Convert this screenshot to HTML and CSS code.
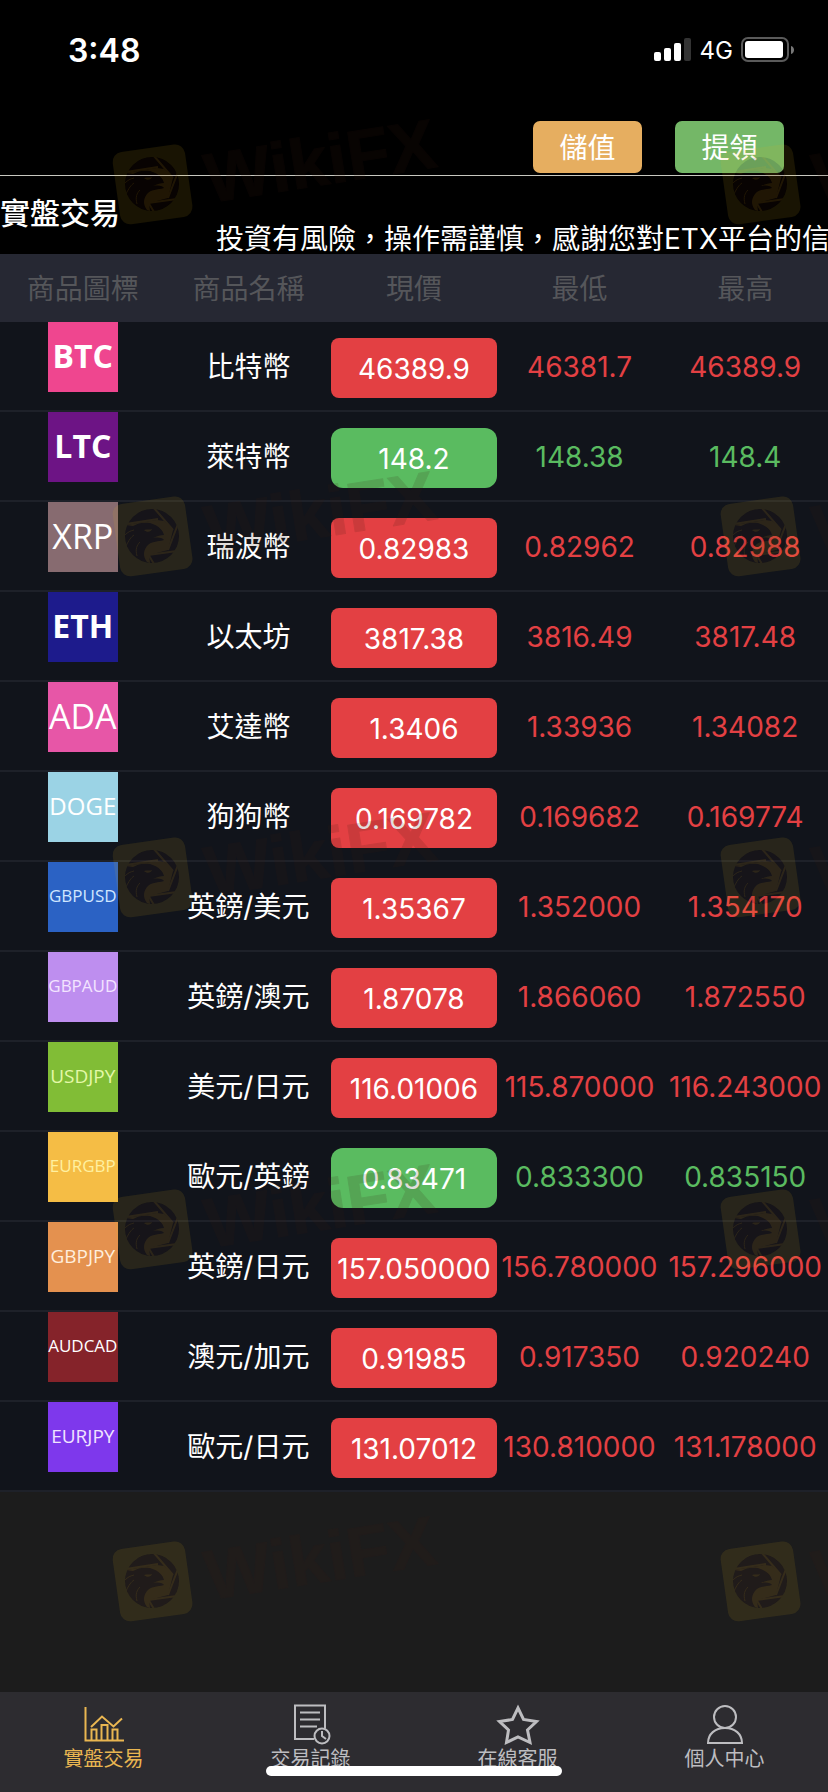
FILE: index.html
```html
<!DOCTYPE html>
<html lang="zh-Hant">
<head>
<meta charset="utf-8">
<meta name="viewport" content="width=device-width, initial-scale=1">
<title>實盤交易</title>
<link rel="stylesheet" href="styles.css">
</head>
<body>
<div class="app">
  <header class="top">
    <div class="status">
      <span class="clock">3:48</span>
      <div class="signals">
        <svg width="38" height="24" viewBox="0 0 38 24" aria-hidden="true">
          <rect x="0" y="14" width="7" height="9" rx="2" fill="#fff"/>
          <rect x="10" y="10" width="7" height="13" rx="2" fill="#fff"/>
          <rect x="20" y="5" width="7" height="18" rx="2" fill="#fff"/>
          <rect x="30" y="0" width="7" height="23" rx="2" fill="#333"/>
        </svg>
        <span class="network">4G</span>
        <svg width="54" height="26" viewBox="0 0 54 26" aria-hidden="true">
          <rect x="1" y="1" width="46" height="23" rx="6" fill="none" stroke="#5a5a5a" stroke-width="2"/>
          <rect x="4" y="4" width="38" height="17" rx="3" fill="#fff"/>
          <path d="M50 9c4 1 4 7 0 8z" fill="#777"/>
        </svg>
      </div>
    </div>
    <div class="actions">
      <button class="btn deposit" type="button">儲值</button>
      <button class="btn withdraw" type="button">提領</button>
    </div>
    <div class="notice">
      <h1 class="title">實盤交易</h1>
      <p class="ticker">投資有風險，操作需謹慎，感謝您對ETX平台的信</p>
    </div>
  </header>

  <main class="market">
    <table class="quotes">
      <thead>
        <tr><th>商品圖標</th><th>商品名稱</th><th>現價</th><th>最低</th><th>最高</th></tr>
      </thead>
      <tbody>
        <tr class="down"><td class="logo"><span class="tile btc">BTC</span></td><td class="name">比特幣</td><td class="now"><span class="price">46389.9</span></td><td class="num">46381.7</td><td class="num">46389.9</td></tr>
        <tr class="up"><td class="logo"><span class="tile ltc">LTC</span></td><td class="name">萊特幣</td><td class="now"><span class="price">148.2</span></td><td class="num">148.38</td><td class="num">148.4</td></tr>
        <tr class="down"><td class="logo"><span class="tile xrp">XRP</span></td><td class="name">瑞波幣</td><td class="now"><span class="price">0.82983</span></td><td class="num">0.82962</td><td class="num">0.82988</td></tr>
        <tr class="down"><td class="logo"><span class="tile eth">ETH</span></td><td class="name">以太坊</td><td class="now"><span class="price">3817.38</span></td><td class="num">3816.49</td><td class="num">3817.48</td></tr>
        <tr class="down"><td class="logo"><span class="tile ada">ADA</span></td><td class="name">艾達幣</td><td class="now"><span class="price">1.3406</span></td><td class="num">1.33936</td><td class="num">1.34082</td></tr>
        <tr class="down"><td class="logo"><span class="tile doge">DOGE</span></td><td class="name">狗狗幣</td><td class="now"><span class="price">0.169782</span></td><td class="num">0.169682</td><td class="num">0.169774</td></tr>
        <tr class="down"><td class="logo"><span class="tile pair gbpusd">GBPUSD</span></td><td class="name">英鎊/美元</td><td class="now"><span class="price">1.35367</span></td><td class="num">1.352000</td><td class="num">1.354170</td></tr>
        <tr class="down"><td class="logo"><span class="tile pair gbpaud">GBPAUD</span></td><td class="name">英鎊/澳元</td><td class="now"><span class="price">1.87078</span></td><td class="num">1.866060</td><td class="num">1.872550</td></tr>
        <tr class="down"><td class="logo"><span class="tile pair yen usdjpy">USDJPY</span></td><td class="name">美元/日元</td><td class="now"><span class="price">116.01006</span></td><td class="num">115.870000</td><td class="num">116.243000</td></tr>
        <tr class="up"><td class="logo"><span class="tile pair eurgbp">EURGBP</span></td><td class="name">歐元/英鎊</td><td class="now"><span class="price">0.83471</span></td><td class="num">0.833300</td><td class="num">0.835150</td></tr>
        <tr class="down"><td class="logo"><span class="tile pair yen gbpjpy">GBPJPY</span></td><td class="name">英鎊/日元</td><td class="now"><span class="price">157.050000</span></td><td class="num">156.780000</td><td class="num">157.296000</td></tr>
        <tr class="down"><td class="logo"><span class="tile pair audcad">AUDCAD</span></td><td class="name">澳元/加元</td><td class="now"><span class="price">0.91985</span></td><td class="num">0.917350</td><td class="num">0.920240</td></tr>
        <tr class="down"><td class="logo"><span class="tile pair yen eurjpy">EURJPY</span></td><td class="name">歐元/日元</td><td class="now"><span class="price">131.07012</span></td><td class="num">130.810000</td><td class="num">131.178000</td></tr>
      </tbody>
    </table>
  </main>

  <nav class="tabs">
    <a class="tab active" href="#market">
      <svg class="tab-icon" viewBox="0 0 40 40" aria-hidden="true"><path d="M1.500 2v33.500H40M7 22L18 11.500l11.500 10 8.500-8M7.500 35V24.500h5V35M17.500 35V20h6v15M28.500 35V24.500h5V35"/></svg>
      <span>實盤交易</span>
    </a>
    <a class="tab" href="#orders">
      <svg class="tab-icon" viewBox="0 0 40 40" aria-hidden="true"><path d="M23 34H4V0.500h30v23M9 7.500h20M9 14.500h20M9 21.500h17"/><circle cx="31" cy="31" r="7.500"/><path d="M31 26v5l4 3"/></svg>
      <span>交易記錄</span>
    </a>
    <a class="tab" href="#service">
      <svg class="tab-icon" viewBox="0 0 40 40" aria-hidden="true"><path class="thick" d="M20 3l5.500 11.500 13 2L29.500 25 32 37.500 20 32 8.500 37.500 10.500 25 1.500 16.500l13-2z"/></svg>
      <span>在線客服</span>
    </a>
    <a class="tab" href="#me">
      <svg class="tab-icon" viewBox="0 0 40 40" aria-hidden="true"><circle cx="20" cy="12" r="11"/><path d="M3 38c0-9 7-15 17-15s17 6 17 15z"/></svg>
      <span>個人中心</span>
    </a>
  </nav>
  <div class="home-bar"></div>

  <svg class="watermarks" aria-hidden="true">
    <defs>
      <mask id="eagle" maskUnits="userSpaceOnUse" x="-5" y="-5" width="95" height="95">
        <rect x="-5" y="-5" width="95" height="95" fill="#fff"/>
        <circle cx="40" cy="40" r="27" fill="#000"/>
        <path d="M14 29L45 24L52 25L61 34L56 54L37 59L38 67L35 66C31 61 31 55 35 50C39 45 45 46 52 44C51 42 47 41 41 42C45 40 49 39 52 39C51 35 48 30 38 27C31 26 26 27 21 30Z" fill="#fff"/>
        <g fill="none" stroke="#fff" stroke-width="2">
          <path d="M14 28L46 23M42 12L61 34M66 28L56 54M65 55L36 59M36 58L42 68"/>
        </g>
        <g fill="none" stroke="#fff" stroke-width="1">
          <path d="M13 39C16 36 18 35 22 34M14 50C17 44 19 41 22 39M25 60C23 53 25 49 28 46"/>
        </g>
        <path d="M32 34c3-1 6 0 8-1-1 3-5 4-8 1z" fill="#fff"/>
      </mask>
      <g id="mark">
        <circle cx="40" cy="40" r="27" fill="#3a1410" fill-opacity=".14"/>
        <g mask="url(#eagle)">
          <rect x="4" y="4" width="73" height="73" rx="10" transform="rotate(-8 40 40)" fill="#e6b818" fill-opacity=".11"/>
        </g>
        <text class="mark-text" transform="translate(97 59) rotate(-9)">WikiFX</text>
      </g>
    </defs>
    <use href="#mark" x="112" y="144"/><use href="#mark" x="720" y="144"/>
    <use href="#mark" x="112" y="496"/><use href="#mark" x="720" y="496"/>
    <use href="#mark" x="112" y="837"/><use href="#mark" x="720" y="837"/>
    <use href="#mark" x="112" y="1189"/><use href="#mark" x="720" y="1189"/>
    <use href="#mark" x="112" y="1541"/><use href="#mark" x="720" y="1541"/>
  </svg>
</div>
</body>
</html>
```
FILE: styles.css
```css
* { box-sizing: border-box; }

body {
  margin: 0;
  background: #1c1c1c;
  color: #fff;
  font-family: Inter, "Noto Sans CJK TC", sans-serif;
  font-size: 28px;
}

.app {
  position: relative;
  display: flex;
  flex-direction: column;
  min-height: 100vh;
  overflow: hidden;
}

.top { background: #000; }

.status {
  display: flex;
  justify-content: space-between;
  align-items: center;
  height: 100px;
  padding: 0 33px 0 68px;
}

.clock { font-size: 32px; font-weight: 600; }

.signals { display: flex; align-items: center; gap: 8px; }

.network { font-size: 24px; }

.actions {
  display: flex;
  justify-content: flex-end;
  gap: 33px;
  padding: 21px 44px 2px;
  border-bottom: 1px solid #c8c8c0;
}

.btn {
  width: 109px;
  height: 52px;
  padding: 0 0 2px;
  border: 0;
  border-radius: 7px;
  color: #fff;
  font: inherit;
}

.deposit { background: #e6ae60; }
.withdraw { background: #74b767; }

.notice {
  display: flex;
  gap: 96px;
  height: 78px;
  overflow: hidden;
  white-space: nowrap;
}

.title {
  flex: none;
  margin: 0;
  padding-top: 17px;
  font-size: 30px;
  font-weight: 500;
  line-height: 40px;
}

.ticker {
  flex: none;
  margin: 0;
  padding-top: 43px;
  line-height: 40px;
}

.market { flex: 1; }

.quotes {
  width: 100%;
  border-collapse: collapse;
  table-layout: fixed;
  text-align: center;
}

.quotes th {
  height: 68px;
  padding: 0 0 2px;
  background: #262833;
  color: #55565a;
  font-weight: 400;
}

.quotes td {
  height: 90px;
  padding: 0;
  background: #11141b;
  box-shadow: inset 0 -2px #1e2129;
}

.quotes .logo { vertical-align: top; }
.quotes .name { padding-bottom: 4px; }

.tile {
  display: flex;
  justify-content: center;
  width: 70px;
  height: 70px;
  margin: 0 auto;
  font-family: "Open Sans", sans-serif;
  font-size: 34px;
  line-height: 68px;
}

.btc { background: #ef468f; font-size: 32px; font-weight: 700; }
.ltc { background: #6d1485; font-size: 32px; font-weight: 700; }
.xrp { background: #876b70; }
.eth { background: #1d1b8c; font-size: 32px; font-weight: 700; }
.ada { background: #e756a7; }
.doge { background: #9bd3e5; font-size: 24px; }

.pair { font-size: 17px; font-weight: 500; }
.yen { font-size: 19px; }

.gbpusd { background: #2b62c4; color: #cfe6ff; }
.gbpaud { background: #be8eef; color: #f3e4ff; }
.usdjpy { background: #81bd36; color: #e4f8a8; }
.eurgbp { background: #f5bd45; color: #fff0a0; }
.gbpjpy { background: #e4914f; color: #ffeedd; }
.audcad { background: #85232a; }
.eurjpy { background: #7e38ec; color: #f0e4ff; }

.price {
  display: block;
  height: 60px;
  border-radius: 8px;
  line-height: 62px;
}

.quotes .now { padding-top: 2px; }

.up .price { border-radius: 12px; background: #5abb60; }
.down .price { background: #e34043; }
.up .num { color: #5abb60; }
.down .num { color: #e34043; }

.tabs {
  display: grid;
  grid-template-columns: repeat(4, 1fr);
  height: 100px;
  background: #2d2c30;
}

.tab {
  display: flex;
  flex-direction: column;
  align-items: center;
  padding-top: 13px;
  color: #bdbdc0;
  font-size: 20px;
  line-height: 28px;
  text-decoration: none;
}

.active { color: #e9b651; }

.tab-icon {
  width: 40px;
  height: 40px;
  overflow: visible;
  fill: none;
  stroke: currentColor;
  stroke-width: 2;
}

.thick { stroke-width: 3; }

.home-bar {
  position: absolute;
  bottom: 16px;
  left: 50%;
  width: 296px;
  height: 10px;
  margin-left: -148px;
  border-radius: 5px;
  background: #fff;
}

.watermarks {
  position: absolute;
  inset: 0;
  width: 100%;
  height: 100%;
  pointer-events: none;
}

.mark-text {
  fill: #3a1c10;
  stroke: #3a1c10;
  stroke-width: 1px;
  stroke-linejoin: round;
  opacity: .14;
  font: 700 70px "Liberation Sans", sans-serif;
}
```
